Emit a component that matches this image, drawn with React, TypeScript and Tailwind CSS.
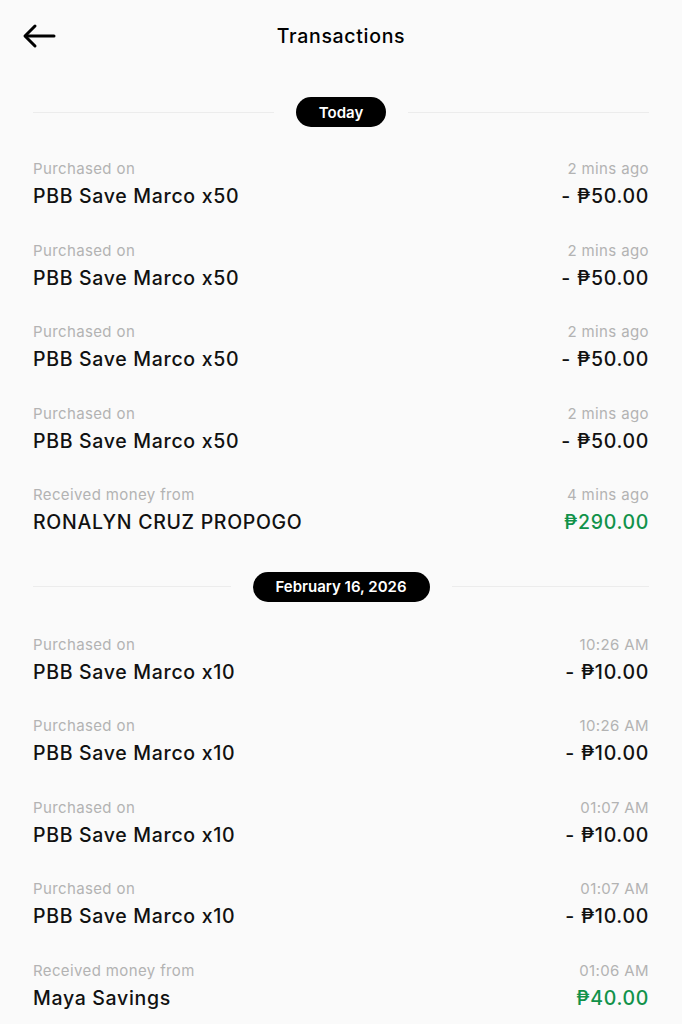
import React from "react";

type Tx = { label: string; title: string; time: string; amount: string; credit?: boolean };

const today: Tx[] = [
  { label: "Purchased on", title: "PBB Save Marco x50", time: "2 mins ago", amount: "- ₱50.00" },
  { label: "Purchased on", title: "PBB Save Marco x50", time: "2 mins ago", amount: "- ₱50.00" },
  { label: "Purchased on", title: "PBB Save Marco x50", time: "2 mins ago", amount: "- ₱50.00" },
  { label: "Purchased on", title: "PBB Save Marco x50", time: "2 mins ago", amount: "- ₱50.00" },
  { label: "Received money from", title: "RONALYN CRUZ PROPOGO", time: "4 mins ago", amount: "₱290.00", credit: true },
];

const feb: Tx[] = [
  { label: "Purchased on", title: "PBB Save Marco x10", time: "10:26 AM", amount: "- ₱10.00" },
  { label: "Purchased on", title: "PBB Save Marco x10", time: "10:26 AM", amount: "- ₱10.00" },
  { label: "Purchased on", title: "PBB Save Marco x10", time: "01:07 AM", amount: "- ₱10.00" },
  { label: "Purchased on", title: "PBB Save Marco x10", time: "01:07 AM", amount: "- ₱10.00" },
  { label: "Received money from", title: "Maya Savings", time: "01:06 AM", amount: "₱40.00", credit: true },
];

function Divider({ text }: { text: string }) {
  return (
    <div className="flex items-center gap-[22px] px-[33px]">
      <div className="h-px flex-1 bg-[#ececec]" />
      <div className="flex h-[30px] items-center rounded-full bg-black px-[23px] text-[15px] font-semibold leading-none text-white">
        {text}
      </div>
      <div className="h-px flex-1 bg-[#ececec]" />
    </div>
  );
}

function Row({ tx }: { tx: Tx }) {
  return (
    <div className="flex h-[81.5px] flex-col px-[33px] pt-[1px]">
      <div className="flex h-[20px] items-center justify-between text-[15px] leading-[20px] tracking-[0.025em] text-[#b3b3b3]">
        <span>{tx.label}</span>
        <span>{tx.time}</span>
      </div>
      <div className="mt-[4px] flex h-[26px] items-center justify-between text-[19.5px] font-medium leading-[26px] tracking-[0.035em] text-[#111111]">
        <span>{tx.title}</span>
        <span className={tx.credit ? "text-[#11924a]" : "text-[#111111]"}>{tx.amount}</span>
      </div>
    </div>
  );
}

export default function App() {
  return (
    <div
      className="min-h-[1024px] w-full overflow-hidden bg-[#fafafa]"
      style={{ fontFamily: "Inter, 'Noto Sans', 'DejaVu Sans', sans-serif" }}
    >
      <div className="relative flex h-[72px] items-center justify-center pt-[1px]">
        <svg
          className="absolute left-[22px] top-[22px]"
          width="34"
          height="28"
          viewBox="0 0 34 28"
          fill="none"
          stroke="#000"
          strokeWidth="3"
          strokeLinecap="round"
          strokeLinejoin="round"
        >
          <path d="M32 14H4" />
          <path d="M13 4L3 14L13 24" />
        </svg>
        <span className="text-[19.5px] font-medium tracking-[0.035em] text-black">Transactions</span>
      </div>
      <div className="mt-[25px]">
        <Divider text="Today" />
      </div>
      <div className="mt-[31px]">
        {today.map((t, i) => (
          <Row key={i} tx={t} />
        ))}
      </div>
      <div className="mt-[6px]">
        <Divider text="February 16, 2026" />
      </div>
      <div className="mt-[32px]">
        {feb.map((t, i) => (
          <Row key={i} tx={t} />
        ))}
      </div>
    </div>
  );
}
